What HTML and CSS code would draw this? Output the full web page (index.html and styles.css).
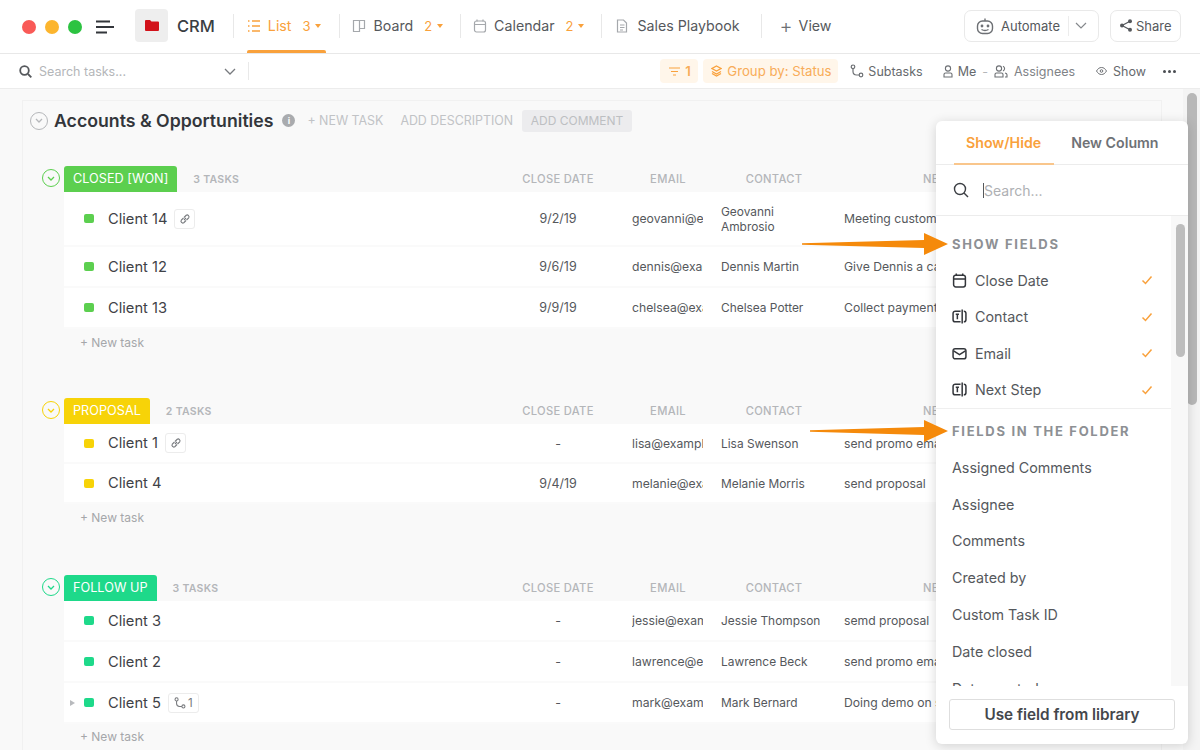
FILE: index.html
```html
<!DOCTYPE html>
<html lang="en">
<head>
    <meta charset="UTF-8">
    <title>CRM - List</title>
    <link rel="stylesheet" href="styles.css">
</head>
<body>
<svg class="sprite" width="0" height="0">
    <defs>
        <symbol id="i-list" viewBox="0 0 14 14"><path d="M1 2h1.500M5 2h8M1 7h1.500M5 7h8M1 12h1.500M5 12h8"/></symbol>
        <symbol id="i-board" viewBox="0 0 14 14"><path d="M1.500 1.500h11v8h-5v3h-6zM7.500 1.500v8"/></symbol>
        <symbol id="i-cal" viewBox="0 0 14 14"><rect x="1.500" y="2" width="11" height="11" rx="2"/><path d="M1.500 5.500h11M4 .5v2M10 .5v2"/></symbol>
        <symbol id="i-doc" viewBox="0 0 14 14"><path d="M2.500 1h6l3 3v9h-9zM5 6h4.500M5 8.500h4.500M5 11h3"/></symbol>
        <symbol id="i-sub" viewBox="0 0 14 14"><circle cx="3" cy="2.800" r="1.800"/><circle cx="11" cy="11" r="1.800"/><path d="M3 4.600v3c0 2.500 1.500 3.400 3.500 3.400h2.700"/></symbol>
        <symbol id="i-text" viewBox="0 0 14 14"><path d="M8 2H3a2 2 0 0 0-2 2v6a2 2 0 0 0 2 2h5M11 2c1.300 0 2 .7 2 2v6c0 1.300-.7 2-2 2M9.500 .5v13M3.500 5h3M5 5v4.500"/></symbol>
        <symbol id="i-check" viewBox="0 0 12 12"><path d="M1.500 6.500l3 3 6-7"/></symbol>
    </defs>
</svg>

<div class="page">
    <header class="topbar">
        <div class="dots"><i class="dot red"></i><i class="dot yellow"></i><i class="dot green"></i></div>
        <svg class="burger" width="18" height="14" viewBox="0 0 18 14"><path d="M0 1.500h14M0 7h18M0 12.500h11"/></svg>
        <div class="folder-tile">
            <svg width="14" height="11" viewBox="0 0 14 11"><path d="M0 1a1 1 0 0 1 1-1h4l1.500 1.500H13a1 1 0 0 1 1 1V10a1 1 0 0 1-1 1H1a1 1 0 0 1-1-1z" fill="#d2121a"/></svg>
        </div>
        <span class="crm">CRM</span>
        <nav class="tabs">
            <a class="tab active"><svg class="ic"><use href="#i-list"/></svg>List<span class="count">3</span><i class="caret"></i></a>
            <a class="tab"><svg class="ic"><use href="#i-board"/></svg>Board<span class="count">2</span><i class="caret"></i></a>
            <a class="tab"><svg class="ic"><use href="#i-cal"/></svg>Calendar<span class="count">2</span><i class="caret"></i></a>
            <a class="tab doc"><svg class="ic"><use href="#i-doc"/></svg>Sales Playbook</a>
            <a class="tab plain"><span class="plus">+</span>View</a>
        </nav>
        <div class="actions">
            <button class="btn automate">
                <svg width="20" height="18" viewBox="0 0 20 18" fill="none" stroke="#6d7074" stroke-width="1.400"><rect x="2.500" y="4" width="15" height="12.500" rx="5"/><path d="M10 4V1.500M6.500 12.500c2 1.200 5 1.200 7 0"/><circle cx="7" cy="9" r=".7"/><circle cx="13" cy="9" r=".7"/></svg>
                Automate
                <span class="btn-split"></span>
                <svg width="12" height="7" viewBox="0 0 12 7" fill="none" stroke="#85888c" stroke-width="1.200"><path d="M1 1l5 5 5-5"/></svg>
            </button>
            <button class="btn share">
                <svg width="12" height="13" viewBox="0 0 12 13" fill="#55585c"><circle cx="10" cy="2.200" r="2"/><circle cx="2" cy="6.500" r="2"/><circle cx="10" cy="10.800" r="2"/><path d="M2 6.500l8-4.300M2 6.500l8 4.300" stroke="#55585c" stroke-width="1.300"/></svg>
                Share
            </button>
        </div>
    </header>

    <div class="filterbar">
        <div class="search">
            <svg width="13" height="13" viewBox="0 0 13 13" fill="none" stroke="#55585c" stroke-width="1.800"><circle cx="5.500" cy="5.500" r="4.300"/><path d="M9 9l3.300 3.300"/></svg>
            <span class="search-text">Search tasks...</span>
            <svg class="search-chev" width="12" height="7" viewBox="0 0 12 7" fill="none" stroke="#777a7e" stroke-width="1.300"><path d="M1 1l5 5 5-5"/></svg>
        </div>
        <div class="filters">
            <span class="chip chip-num">
                <svg width="11" height="9" viewBox="0 0 11 9" fill="none" stroke="#f9a13c" stroke-width="1.200"><path d="M0 1h11M2 4.500h7M4 8h3"/></svg>
                1
            </span>
            <span class="chip chip-group">
                <svg width="11" height="12" viewBox="0 0 11 12" fill="none" stroke="#f9a13c" stroke-width="1.300"><path d="M5.500 1L10 3.500 5.500 6 1 3.500zM1 6.500L5.500 9 10 6.500M1 8.500L5.500 11 10 8.500"/></svg>
                Group by: Status
            </span>
            <span class="fitem subtasks"><svg class="ic ic-sm"><use href="#i-sub"/></svg>Subtasks</span>
            <span class="fitem me">
                <svg width="10" height="13" viewBox="0 0 10 13" fill="none" stroke="#6d7074" stroke-width="1.100"><circle cx="5" cy="3.500" r="2.600"/><path d="M1 12V9.500c0-1 .8-1.500 1.500-1.500h5c.7 0 1.500.5 1.500 1.500V12z"/></svg>
                Me
            </span>
            <span class="fdash">-</span>
            <span class="fitem assignees">
                <svg width="14" height="13" viewBox="0 0 14 13" fill="none" stroke="#6d7074" stroke-width="1.100"><circle cx="5" cy="3.500" r="2.600"/><path d="M1 12V9.500C1 8.500 1.800 8 2.500 8h5C8.200 8 9 8.500 9 9.500V12zM9 1.200a2.600 2.600 0 0 1 0 4.800M11 8c1 .2 2 .7 2 1.700V12h-2"/></svg>
                Assignees
            </span>
            <span class="fitem show">
                <svg width="11" height="8" viewBox="0 0 11 8" fill="none" stroke="#6d7074" stroke-width="1"><path d="M.5 4C2 1.500 3.500.5 5.500.5S9 1.500 10.500 4C9 6.500 7.500 7.500 5.500 7.500S2 6.500.5 4z"/><circle cx="5.500" cy="4" r="1.300"/></svg>
                Show
            </span>
            <span class="more"><i></i><i></i><i></i></span>
        </div>
    </div>

    <main class="content">
        <section class="panel">
            <div class="list-head">
                <span class="round grey"><svg width="8" height="5" viewBox="0 0 8 5"><path d="M1 1l3 3 3-3"/></svg></span>
                <h1>Accounts &amp; Opportunities</h1>
                <span class="info">i</span>
                <a class="head-link new">+ NEW TASK</a>
                <a class="head-link desc">ADD DESCRIPTION</a>
                <a class="head-link comment">ADD COMMENT</a>
            </div>

            <div class="group won">
                <span class="round"><svg width="8" height="5" viewBox="0 0 8 5"><path d="M1 1l3 3 3-3"/></svg></span>
                <div class="cols group-head">
                    <div class="group-name"><span class="tag">CLOSED [WON]</span><span class="task-count">3 TASKS</span></div>
                    <span>CLOSE DATE</span><span class="c-mid">EMAIL</span><span class="c-con">CONTACT</span><span class="c-next">NEXT STEP</span>
                </div>
                <div class="rows">
                    <div class="cols row tall">
                        <div class="name"><i class="sq"></i>Client 14
                            <span class="badge square"><svg width="12" height="12" viewBox="0 0 12 12" fill="none" stroke="#777a7e" stroke-width="1.100"><path d="M5 7l2-2M4.500 5L2.300 7.200a1.800 1.800 0 0 0 2.500 2.500L7 7.500M7.500 7l2.200-2.200a1.800 1.800 0 0 0-2.500-2.500L5 4.500"/></svg></span>
                        </div>
                        <span class="date">9/2/19</span><span class="cell mail-cell">geovanni@example.com</span><span class="cell contact wrap">Geovanni Ambrosio</span><span class="cell c-next">Meeting customer on site</span>
                    </div>
                    <div class="cols row">
                        <div class="name"><i class="sq"></i>Client 12</div>
                        <span class="date">9/6/19</span><span class="cell mail-cell">dennis@example.com</span><span class="cell contact">Dennis Martin</span><span class="cell c-next">Give Dennis a call</span>
                    </div>
                    <div class="cols row">
                        <div class="name"><i class="sq"></i>Client 13</div>
                        <span class="date">9/9/19</span><span class="cell mail-cell">chelsea@example.com</span><span class="cell contact">Chelsea Potter</span><span class="cell c-next">Collect payment</span>
                    </div>
                </div>
                <a class="new-task">+ New task</a>
            </div>

            <div class="group proposal">
                <span class="round"><svg width="8" height="5" viewBox="0 0 8 5"><path d="M1 1l3 3 3-3"/></svg></span>
                <div class="cols group-head">
                    <div class="group-name"><span class="tag">PROPOSAL</span><span class="task-count">2 TASKS</span></div>
                    <span>CLOSE DATE</span><span class="c-mid">EMAIL</span><span class="c-con">CONTACT</span><span class="c-next">NEXT STEP</span>
                </div>
                <div class="rows">
                    <div class="cols row">
                        <div class="name"><i class="sq"></i>Client 1
                            <span class="badge square"><svg width="12" height="12" viewBox="0 0 12 12" fill="none" stroke="#777a7e" stroke-width="1.100"><path d="M5 7l2-2M4.500 5L2.300 7.200a1.800 1.800 0 0 0 2.500 2.500L7 7.500M7.500 7l2.200-2.200a1.800 1.800 0 0 0-2.500-2.500L5 4.500"/></svg></span>
                        </div>
                        <span class="date">-</span><span class="cell mail-cell">lisa@example.com</span><span class="cell contact">Lisa Swenson</span><span class="cell c-next">send promo email</span>
                    </div>
                    <div class="cols row">
                        <div class="name"><i class="sq"></i>Client 4</div>
                        <span class="date">9/4/19</span><span class="cell mail-cell">melanie@example.com</span><span class="cell contact">Melanie Morris</span><span class="cell c-next">send proposal</span>
                    </div>
                </div>
                <a class="new-task">+ New task</a>
            </div>

            <div class="group follow">
                <span class="round"><svg width="8" height="5" viewBox="0 0 8 5"><path d="M1 1l3 3 3-3"/></svg></span>
                <div class="cols group-head">
                    <div class="group-name"><span class="tag">FOLLOW UP</span><span class="task-count">3 TASKS</span></div>
                    <span>CLOSE DATE</span><span class="c-mid">EMAIL</span><span class="c-con">CONTACT</span><span class="c-next">NEXT STEP</span>
                </div>
                <div class="rows">
                    <div class="cols row">
                        <div class="name"><i class="sq"></i>Client 3</div>
                        <span class="date">-</span><span class="cell mail-cell">jessie@example.com</span><span class="cell contact">Jessie Thompson</span><span class="cell c-next">semd proposal</span>
                    </div>
                    <div class="cols row">
                        <div class="name"><i class="sq"></i>Client 2</div>
                        <span class="date">-</span><span class="cell mail-cell">lawrence@example.com</span><span class="cell contact">Lawrence Beck</span><span class="cell c-next">send promo email</span>
                    </div>
                    <div class="cols row">
                        <div class="name"><i class="expander"></i><i class="sq"></i>Client 5
                            <span class="badge wide"><svg class="ic ic-xs"><use href="#i-sub"/></svg>1</span>
                        </div>
                        <span class="date">-</span><span class="cell mail-cell">mark@example.com</span><span class="cell contact">Mark Bernard</span><span class="cell c-next">Doing demo on site</span>
                    </div>
                </div>
                <a class="new-task">+ New task</a>
            </div>
        </section>
        <div class="page-scroll"><i></i></div>
    </main>

    <!-- column picker, sits over the list -->
    <aside class="picker">
        <div class="picker-tabs">
            <span class="picker-tab on">Show/Hide</span>
            <span class="picker-tab">New Column</span>
        </div>
        <div class="picker-search">
            <svg width="16" height="16" viewBox="0 0 16 16" fill="none" stroke="#3c3f44" stroke-width="1.400"><circle cx="7" cy="7" r="5.500"/><path d="M11 11l4 4"/></svg>
            <span class="caret-bar"></span><span>Search...</span>
        </div>
        <div class="picker-body">
            <div class="picker-list">
                <div class="picker-sec">
                    <h4>SHOW FIELDS</h4>
                    <div class="field"><svg class="ic ic-f"><use href="#i-cal"/></svg>Close Date<svg class="tick"><use href="#i-check"/></svg></div>
                    <div class="field"><svg class="ic ic-f"><use href="#i-text"/></svg>Contact<svg class="tick"><use href="#i-check"/></svg></div>
                    <div class="field"><svg class="ic-f mail" viewBox="0 0 14 14"><rect x="1" y="2.500" width="12" height="9.500" rx="2"/><path d="M1.500 4.500L7 8l5.500-3.500"/></svg>Email<svg class="tick"><use href="#i-check"/></svg></div>
                    <div class="field"><svg class="ic ic-f"><use href="#i-text"/></svg>Next Step<svg class="tick"><use href="#i-check"/></svg></div>
                </div>
                <div class="picker-sec second">
                    <h4>FIELDS IN THE FOLDER</h4>
                    <div class="field">Assigned Comments</div>
                    <div class="field">Assignee</div>
                    <div class="field">Comments</div>
                    <div class="field">Created by</div>
                    <div class="field">Custom Task ID</div>
                    <div class="field">Date closed</div>
                    <div class="field">Date created</div>
                </div>
            </div>
            <div class="picker-track"><i></i></div>
        </div>
        <div class="picker-foot"><button class="lib-btn">Use field from library</button></div>
    </aside>

    <svg class="arrow one" width="148" height="24" viewBox="0 0 148 24"><path d="M0 11.200L122 8V1l24 11-24 11v-7L0 12.800z" fill="#f58a0b"/></svg>
    <svg class="arrow two" width="140" height="24" viewBox="0 0 140 24"><path d="M0 11.200L114 8V1l24 11-24 11v-7L0 12.800z" fill="#f58a0b"/></svg>
</div>
</body>
</html>
```

FILE: styles.css
```css
* {
    box-sizing: border-box;
}
html, body {
    margin: 0;
    height: 100%;
    overflow: hidden;
}
body {
    font-family: Inter, "Open Sans", sans-serif;
    color: #3f4247;
    background: #fff;
}
.sprite {
    position: absolute;
}
.page {
    position: relative;
    width: 1200px;
    height: 750px;
    overflow: hidden;
    display: flex;
    flex-direction: column;
}
.ic {
    width: 14px;
    height: 14px;
    fill: none;
    stroke: #a5a8ac;
    stroke-width: 1.200;
    flex: none;
}

/* top bar */
.topbar {
    height: 54px;
    flex: none;
    display: flex;
    align-items: center;
    padding-left: 22px;
    border-bottom: 1px solid #e8e8e8;
}
.dots {
    display: flex;
    gap: 9px;
}
.dot {
    width: 14px;
    height: 14px;
    border-radius: 50%;
}
.red { background: #f95a57; }
.yellow { background: #fcb52e; }
.green { background: #2cc341; }
.burger {
    margin-left: 14px;
    fill: none;
    stroke: #33363b;
    stroke-width: 2;
}
.folder-tile {
    width: 33px;
    height: 33px;
    margin: -3px 0 0 21px;
    background: #eeeeee;
    border-radius: 4px;
    display: flex;
    align-items: center;
    justify-content: center;
}
.crm {
    margin: -1px 0 0 9px;
    font-size: 16.500px;
    font-weight: 500;
    color: #3a3d42;
}
.tabs {
    display: flex;
    align-items: center;
    margin-left: 18px;
    height: 100%;
}
.tab {
    position: relative;
    height: 24px;
    display: flex;
    align-items: center;
    gap: 7px;
    padding: 0 17px 0 12px;
    font-size: 14.200px;
    color: #55585c;
    border-left: 1px solid #e8e8e8;
    margin-top: -2px;
}
.tab.doc {
    gap: 8px;
    padding: 0 21px 0 13px;
}
.tab.plain {
    gap: 6px;
    padding-left: 18px;
}
.plus {
    font-size: 20px;
    line-height: 1;
    color: #6d7074;
    font-weight: 300;
}
.tab.active {
    padding: 0 18px 0 13px;
    color: #f9a13c;
}
.tab.active .ic {
    stroke: #f9a13c;
    stroke-width: 1.500;
}
.tab.active::after {
    content: "";
    position: absolute;
    left: 13px;
    right: 13px;
    bottom: -15px;
    height: 3px;
    border-radius: 2px 2px 0 0;
    background: #f9a13c;
}
.count {
    margin-left: 4px;
    font-size: 13px;
    color: #f9a13c;
}
.caret {
    margin-left: -2px;
    border: 3.500px solid transparent;
    border-top: 4px solid #f9a13c;
    border-bottom: 0;
}
.actions {
    margin-left: auto;
    display: flex;
    gap: 11px;
    padding-right: 19px;
    margin-top: -2px;
}
.btn {
    height: 32px;
    display: flex;
    align-items: center;
    background: #fff;
    border: 1px solid #e9e9e9;
    border-radius: 7px;
    font: inherit;
    font-size: 13px;
    color: #55585c;
}
.automate {
    width: 135px;
    gap: 6px;
    padding: 0 10px;
}
.btn-split {
    width: 1px;
    height: 20px;
    margin-left: 2px;
    background: #ececec;
}
.share {
    width: 71px;
    gap: 4px;
    padding: 0 0 0 9px;
}

/* filter bar */
.filterbar {
    height: 35px;
    flex: none;
    display: flex;
    align-items: center;
    border-bottom: 1px solid #ececec;
    padding-left: 19px;
}
.search {
    width: 217px;
    height: 18px;
    display: flex;
    align-items: center;
    gap: 7px;
    border-right: 1px solid #e9e9e9;
    padding-right: 12px;
    box-sizing: content-box;
}
.search-text {
    font-size: 12.500px;
    color: #b4b6b9;
}
.search-chev {
    margin-left: auto;
}
.filters {
    margin-left: auto;
    display: flex;
    align-items: center;
    padding-right: 24px;
    font-size: 12.500px;
    color: #66696d;
}
.chip {
    height: 24px;
    display: flex;
    align-items: center;
    gap: 5px;
    background: #fff6ea;
    color: #f8ac58;
    border-radius: 4px;
    font-size: 13.200px;
}
.chip-num {
    width: 38px;
    padding-left: 9px;
    font-weight: 600;
}
.chip-group {
    width: 135px;
    margin-left: 5px;
    padding-left: 8px;
    white-space: nowrap;
}
.fitem {
    display: flex;
    align-items: center;
    gap: 6px;
}
.ic-sm {
    stroke: #6d7074;
}
.subtasks { margin-left: 12px; gap: 4px; }
.me { margin-left: 20px; gap: 5px; }
.fdash { margin: 0 6px; color: #b4b6b9; }
.assignees { color: #808387; }
.show { margin-left: 21px; }
.more {
    display: flex;
    gap: 2px;
    margin-left: 17px;
}
.more i {
    width: 3px;
    height: 3px;
    border-radius: 50%;
    background: #4a4d52;
}

/* list */
.content {
    flex: 1;
    min-height: 0;
    display: flex;
    background: #f9f9f9;
}
.panel {
    width: 1140px;
    margin: 11px 0 0 22px;
    border: 1px solid #f1f1f1;
    border-width: 1px 1px 0;
    flex: none;
}
.list-head {
    height: 41px;
    display: flex;
    align-items: center;
    padding: 0 0 2px 7px;
}
.round {
    width: 18px;
    height: 18px;
    flex: none;
    display: flex;
    align-items: center;
    justify-content: center;
    border-radius: 50%;
    border: 1.500px solid var(--status, #b5b7ba);
}
.round svg {
    fill: none;
    stroke: var(--status, #b5b7ba);
    stroke-width: 1.300;
}
h1 {
    margin: 0 0 0 6px;
    font-size: 17.700px;
    font-weight: 600;
    color: #33363b;
}
.info {
    width: 13px;
    height: 13px;
    margin-left: 9px;
    border-radius: 50%;
    background: #a9abae;
    color: #fff;
    font-size: 9px;
    font-weight: 700;
    text-align: center;
    line-height: 13px;
}
.head-link {
    font-size: 12.400px;
    color: #c1c3c6;
    white-space: nowrap;
}
.new { margin-left: 12px; }
.desc { margin-left: 17px; }
.comment {
    width: 110px;
    height: 22px;
    line-height: 21px;
    margin-left: 9px;
    text-align: center;
    background: #ececee;
    border-radius: 3px;
    color: #bdbfc2;
    font-size: 12px;
}

.group {
    --status: #5ccf4f;
    display: grid;
    grid-template-columns: 22px 1fr;
    margin: 42px 0 0 19px;
}
.list-head + .group {
    margin-top: 24px;
}
.proposal { --status: #f7d308; }
.follow { --status: #1ed98a; margin-top: 44px; }
.group > .round {
    margin-top: 3px;
}
.group-head, .rows, .new-task {
    grid-column: 2;
}
.cols {
    display: grid;
    grid-template-columns: 454px 80px 123px 123px 222px 1fr;
    align-items: center;
}
.group-head {
    grid-row: 1;
    height: 26px;
    padding-bottom: 1px;
    font-size: 11.200px;
    font-weight: 500;
    letter-spacing: .3px;
    color: #b4b6b9;
    text-align: center;
    white-space: nowrap;
}
.group-name {
    display: flex;
    align-items: center;
    height: 100%;
    text-align: left;
}
.tag {
    height: 26px;
    line-height: 25px;
    padding: 0 9px;
    background: var(--status);
    color: #fff;
    border-radius: 3px 3px 0 0;
    font-size: 12.700px;
    font-weight: 400;
    letter-spacing: 0;
}
.task-count {
    margin-left: 16px;
    font-size: 10.500px;
    font-weight: 600;
}
.c-mid {
    padding: 0 17px 0 34px;
}
.c-con {
    padding-right: 17px;
}
.row {
    height: 41px;
    background: #fff;
    border-bottom: 2px solid #fafafa;
}
.row.tall {
    height: 55px;
}
.proposal .row {
    height: 40px;
}
.name {
    display: flex;
    align-items: center;
    position: relative;
    padding-left: 20px;
    font-size: 14.700px;
    color: #3f4247;
}
.sq {
    width: 10px;
    height: 9px;
    margin-right: 14px;
    border-radius: 2px;
    background: var(--status);
}
.expander {
    position: absolute;
    left: 6px;
    border: 3.500px solid transparent;
    border-left: 5px solid #b8babd;
    border-right: 0;
}
.badge {
    height: 20px;
    margin-left: 7px;
    display: flex;
    align-items: center;
    justify-content: center;
    border: 1px solid #ececec;
    border-radius: 3px;
    font-size: 11.500px;
    color: #77797d;
}
.square { width: 21px; }
.wide { width: 31px; gap: 2px; }
.ic-xs {
    width: 12px;
    height: 12px;
    stroke: #77797d;
}
.date {
    font-size: 12.500px;
    text-align: center;
    color: #55585c;
}
.cell {
    font-size: 12.200px;
    color: #55585c;
    white-space: nowrap;
    overflow: hidden;
}
.mail-cell {
    margin: 0 18px 0 34px;
}
.contact {
    padding-right: 17px;
    font-size: 11.900px;
}
.cell.wrap {
    white-space: normal;
    line-height: 15px;
}
.new-task {
    height: 27px;
    line-height: 27px;
    padding-left: 16px;
    font-size: 12px;
    color: #a5a7aa;
}
.follow .new-task {
    line-height: 25px;
}
.page-scroll {
    margin-left: auto;
    width: 17px;
    background: #f4f4f4;
    padding: 4px 3px 0 4px;
}
.page-scroll i {
    display: block;
    height: 312px;
    border-radius: 5px;
    background: #b8b8b8;
}

/* column picker */
.picker {
    position: absolute;
    left: 936px;
    top: 121px;
    width: 252px;
    height: 623px;
    display: flex;
    flex-direction: column;
    background: #fff;
    border-radius: 6px;
    box-shadow: 0 2px 12px rgba(0, 0, 0, .16);
}
.picker-tabs {
    height: 44px;
    flex: none;
    display: flex;
    align-items: center;
    padding-left: 18px;
    border-bottom: 1px solid #ececec;
    font-size: 14.200px;
    font-weight: 600;
    color: #6f7276;
}
.picker-tab {
    height: 44px;
    line-height: 43px;
    padding: 0 13px 0 12px;
    margin-right: 5px;
}
.picker-tab.on {
    color: #f9a13c;
    border-bottom: 2px solid #f9c68c;
}
.picker-search {
    height: 51px;
    flex: none;
    display: flex;
    align-items: center;
    padding-left: 17px;
    border-bottom: 1px solid #ececec;
    font-size: 14px;
    color: #aeb0b3;
}
.caret-bar {
    width: 1px;
    height: 15px;
    margin: 0 0 0 14px;
    background: #55585c;
}
.picker-body {
    flex: 1;
    min-height: 0;
    display: flex;
}
.picker-list {
    flex: 1;
    overflow: hidden;
}
.picker-sec {
    padding: 20px 0 0 16px;
}
.picker-sec.second {
    padding-top: 14px;
    border-top: 1px solid #efefef;
}
.picker-sec h4 {
    margin: 0 0 10px;
    height: 16px;
    line-height: 16px;
    font-size: 13px;
    font-weight: 700;
    letter-spacing: 1.700px;
    color: #8d9094;
}
.field {
    height: 36.500px;
    display: flex;
    align-items: center;
    gap: 8px;
    padding-right: 18px;
    font-size: 14.300px;
    color: #55585c;
}
.second .field {
    height: 36.800px;
}
.ic-f {
    width: 15px;
    height: 15px;
    stroke: #33363b;
    fill: none;
    stroke-width: 1.400;
}
.tick {
    margin-left: auto;
    width: 12px;
    height: 12px;
    fill: none;
    stroke: #f9a13c;
    stroke-width: 1.500;
}
.picker-track {
    width: 17px;
    flex: none;
    background: #f8f8f8;
    padding: 8px 3px 0 5px;
}
.picker-track i {
    display: block;
    height: 133px;
    border-radius: 5px;
    background: #bdbdbd;
}
.picker-foot {
    height: 58px;
    flex: none;
    padding: 13px 13px 0;
}
.lib-btn {
    width: 226px;
    height: 31px;
    background: #fff;
    border: 1px solid #dedede;
    border-radius: 3px;
    font: inherit;
    font-size: 15.300px;
    font-weight: 600;
    color: #44474c;
}

/* annotation arrows */
.arrow {
    position: absolute;
}
.arrow.one {
    left: 802px;
    top: 232px;
}
.arrow.two {
    left: 810px;
    top: 419px;
}
```
